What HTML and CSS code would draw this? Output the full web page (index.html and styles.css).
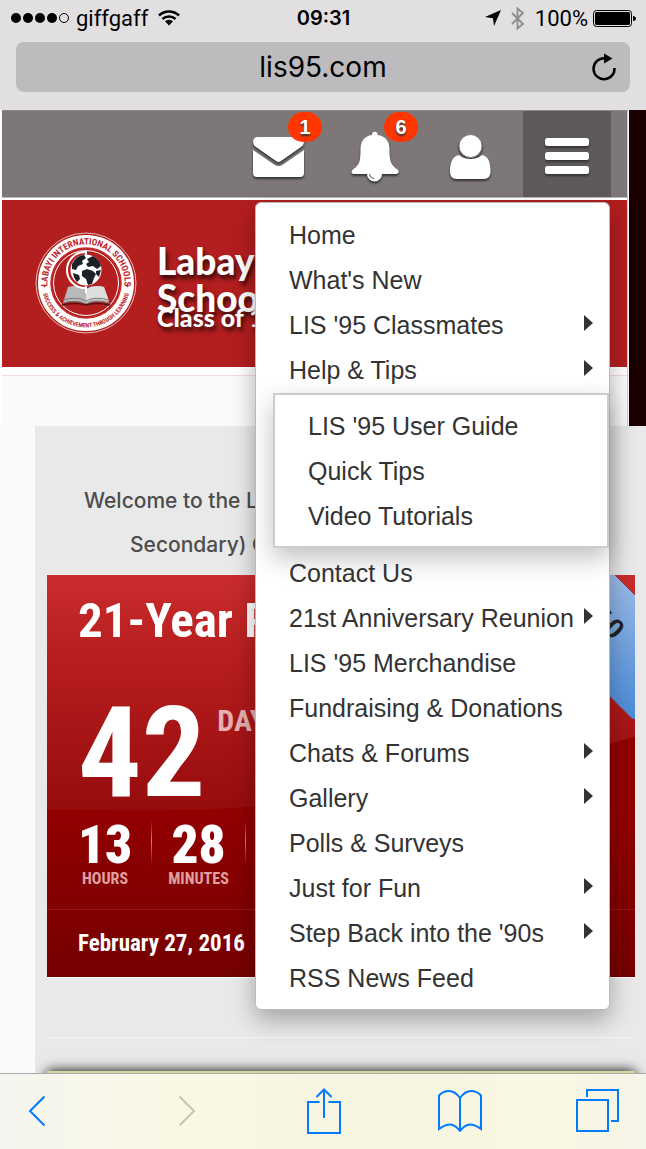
FILE: index.html
```html
<!DOCTYPE html>
<html lang="en">
<head>
<meta charset="utf-8">
<meta name="viewport" content="width=device-width, initial-scale=1">
<title>LIS '95</title>
<link rel="stylesheet" href="styles.css">
</head>
<body>
<div class="app">
  <header class="chrome">
    <div class="status">
      <div class="status-side">
        <svg width="58" height="12" viewBox="0 0 58 12" aria-hidden="true"><circle cx="5" cy="6" r="5"/><circle cx="17" cy="6" r="5"/><circle cx="29" cy="6" r="5"/><circle cx="41" cy="6" r="5"/><circle cx="53" cy="6" r="4.5" fill="none" stroke="#000"/></svg>
        <span class="carrier">giffgaff</span>
        <svg width="22" height="16" viewBox="0 0 22 16" aria-hidden="true"><path d="M1 5.5A14.5 14.5 0 0 1 21 5.5M4.5 9A9.5 9.5 0 0 1 17.500 9" fill="none" stroke="#000" stroke-width="2.6"/><path d="M7 11.300a6 6 0 0 1 8 0L11 15.500z"/></svg>
      </div>
      <time class="clock">09:31</time>
      <div class="status-side status-right">
        <svg width="16" height="16" viewBox="0 0 16 16" aria-hidden="true"><path d="M16 0 9 16 8 8.200 0 7z"/></svg>
        <svg width="14" height="23" viewBox="0 0 14 23" fill="none" stroke="#8c8b8d" stroke-width="1.800" aria-hidden="true"><path d="M1 6l11 11-5.500 4.500v-20L12 6 1 17"/></svg>
        <span class="percent">100%</span>
        <svg width="43" height="17" viewBox="0 0 43 17" aria-hidden="true"><rect x=".5" y=".5" width="38" height="16" rx="3" fill="none" stroke="#000"/><rect x="2" y="2" width="35" height="13" rx="1.500"/><path d="M40 6q3 .5 3 2.500t-3 2.500z"/></svg>
      </div>
    </div>
    <div class="address">
      <span class="domain">lis95.com</span>
      <button class="reload" aria-label="Reload"><svg width="26" height="28" viewBox="0 0 26 28"><path d="M23.500 15A10.500 10.500 0 1 1 13 5.200h3" fill="none" stroke="#000" stroke-width="2.500"/><path d="M13 .5 21.500 5.500 13 10.500z"/></svg></button>
    </div>
  </header>

  <main class="page">
    <div class="top">
      <div class="column">
        <nav class="navbar" aria-label="Main">
          <button class="nav-item" aria-label="Messages">
            <svg class="glyph" width="52" height="42" viewBox="0 0 52 42"><path d="M0 6q0-5 5-5h41q5 0 5 5 0 3-3 5L28 25q-2.500 1.800-5 0L3 11Q0 9 0 6zM0 14l21 14.500q4.500 3 9 0L51 14v23q0 4-4 4H4q-4 0-4-4z"/></svg>
            <span class="badge">1</span>
          </button>
          <button class="nav-item" aria-label="Alerts">
            <svg class="glyph" width="48" height="52" viewBox="0 0 48 52"><path d="M21 4a2.800 2.800 0 1 1 5.500 0C35 5 38.500 11 38.500 18c0 14 2 16 8 20.500 2 2 1 4.500-1.500 4.500H31a7.500 7.500 0 0 1-15 0H3c-3 0-3-3-1-4.500C8 34 9.500 32 9.500 18 9.500 11 13 5 21 4z"/><path d="M18.500 43q.5 4 5 4.500" fill="none" stroke="#777" stroke-width="1.200"/></svg>
            <span class="badge">6</span>
          </button>
          <button class="nav-item" aria-label="Account">
            <svg class="glyph" width="42" height="46" viewBox="0 0 42 46"><path d="M9 21q4.500 4 11.500 4T32 21c7 1 8.500 9 8.500 16 0 5-2 8-7 8H7c-5 0-7-3-7-8 0-7 2-15 9-16z"/><circle cx="20.500" cy="12" r="11.500" stroke="#7e7777"/></svg>
          </button>
          <div class="menu-wrap">
            <button class="nav-item nav-open" aria-label="Menu" aria-expanded="true">
              <svg class="glyph" width="44" height="38" viewBox="0 0 44 38"><rect width="44" height="8" rx="2.500"/><rect width="44" height="8" y="14" rx="2.500"/><rect width="44" height="8" y="28" rx="2.500"/></svg>
            </button>
            <ul class="menu">
              <li><a href="#home">Home</a></li>
              <li><a href="#new">What's New</a></li>
              <li><a class="more" href="#classmates">LIS '95 Classmates</a></li>
              <li><a class="more" href="#help">Help &amp; Tips</a>
                <ul class="submenu">
                  <li><a href="#guide">LIS '95 User Guide</a></li>
                  <li><a href="#tips">Quick Tips</a></li>
                  <li><a href="#video">Video Tutorials</a></li>
                </ul>
              </li>
              <li><a href="#contact">Contact Us</a></li>
              <li><a class="more" href="#reunion">21st Anniversary Reunion</a></li>
              <li><a href="#merchandise">LIS '95 Merchandise</a></li>
              <li><a href="#donations">Fundraising &amp; Donations</a></li>
              <li><a class="more" href="#chats">Chats &amp; Forums</a></li>
              <li><a class="more" href="#gallery">Gallery</a></li>
              <li><a href="#polls">Polls &amp; Surveys</a></li>
              <li><a class="more" href="#fun">Just for Fun</a></li>
              <li><a class="more" href="#nineties">Step Back into the '90s</a></li>
              <li><a href="#rss">RSS News Feed</a></li>
            </ul>
          </div>
        </nav>
        <div class="brand">
          <svg class="crest" width="102" height="102" viewBox="0 0 102 102" role="img" aria-label="School crest">
            <defs>
              <path id="arc-top" d="M16 67A38.500 38.500 0 1 1 86 67"/>
              <path id="arc-bottom" d="M7 47A44.200 44.200 0 1 0 95 47"/>
            </defs>
            <circle cx="51" cy="51" r="50" fill="#b31e1f" stroke="#e9b9b9" stroke-width="1"/>
            <circle cx="51" cy="51" r="40.500" fill="none" stroke="#fff" stroke-width="15"/>
            <circle cx="51" cy="51" r="35" fill="#b31e1f" stroke="#c72b2b" stroke-width="1.500"/>
            <circle cx="51" cy="51" r="32.500" fill="#b31e1f" stroke="#fff" stroke-width="1"/>
            <text class="crest-text"><textPath href="#arc-top" startOffset="50%" text-anchor="middle">LABAYI INTERNATIONAL SCHOOLS</textPath></text>
            <text class="crest-text crest-motto"><textPath href="#arc-bottom" startOffset="50%" text-anchor="middle">SUCCESS &amp; ACHIEVEMENT THROUGH LEARNING</textPath></text>
            <circle cx="9.500" cy="54" r="1.200" fill="#c1272d"/><circle cx="92.500" cy="54" r="1.200" fill="#c1272d"/>
            <path d="M33 55q10-3 18 2 8-5 18-2l5 16q-14-4-23 1-9-5-23-1z" fill="#b9b9b9"/>
            <path d="M51 57q8-5 18-2l5 14q-14-4-23 1z" fill="#dedede"/>
            <path d="M28 71q14-4 23 1 9-5 23-1M28 68q14-4 23 1 9-5 23-1" fill="none" stroke="#777"/>
            <path d="M27 73q14-3 24 0 10-3 24 0" fill="none" stroke="#571010" stroke-width="1.500"/>
            <path d="M50 20A18 18 0 0 0 50 56" fill="none" stroke="#fff" stroke-width="2"/>
            <path d="M51 19v4M51 54v7" stroke="#fff" stroke-width="2"/>
            <circle cx="51" cy="38" r="15.500" fill="#fff"/>
            <path d="M37 32q5-9 12-9l2 3-4 3 1 3-5 2-2 4-4-1zM38 41l6 2 1 4-3 3q-3-3-4-9zM52 27l6-3q7 4 8 10l-4 3-4-3-5 1-2-3 3-2zM47 39l5-2 6 2 3 3-2 4-2 6-4 1-2-6-4-3zM61 39l5-1-2 7-3-3z" fill="#1b2029"/>
          </svg>
          <div class="brand-text">
            <h1>Labayi<br>Schools</h1>
            <p>Class of 1995</p>
          </div>
        </div>
        <div class="spacer"></div>
      </div>
      <aside class="strip"></aside>
    </div>

    <section class="content">
      <p class="welcome">Welcome to the LIS '95</p>
      <p class="welcome welcome-next">Secondary) Class</p>
      <div class="countdown">
        <svg class="gloss" viewBox="0 0 588 403" preserveAspectRatio="none" aria-hidden="true">
          <defs>
            <linearGradient id="shine" x1="0" y1="0" x2="0" y2="1"><stop offset="0" stop-color="#ca2d2d"/><stop offset=".08" stop-color="#c52929"/><stop offset=".4" stop-color="#b51c1d"/><stop offset="1" stop-color="#960c0d"/></linearGradient>
            <linearGradient id="band" x1="0" y1="0" x2="0" y2="1"><stop offset="0" stop-color="#9bbbe8"/><stop offset="1" stop-color="#4a8ad8"/></linearGradient>
          </defs>
          <path d="M0 0H588V162Q350 236 100 236L0 235z" fill="url(#shine)"/>
          <path d="M420 0H568L588 20V144H585L441 0z" fill="url(#band)"/>
          <path d="M568 0 588 20M441 0 585 144" stroke="#933" fill="none"/>
          <text class="ribbon-text" transform="translate(566 66) rotate(45)" text-anchor="end">10</text>
        </svg>
        <div class="count-top">
          <h2>21-Year Reunion</h2>
          <div class="days"><span class="days-num">42</span><span class="days-label">DAYS</span></div>
          <div class="units">
            <div class="unit"><b>13</b><span>HOURS</span></div>
            <div class="unit"><b>28</b><span>MINUTES</span></div>
            <div class="unit"></div>
          </div>
        </div>
        <div class="date">February 27, 2016</div>
      </div>
      <hr class="rule">
      <div class="next-card"></div>
    </section>
  </main>

  <footer class="toolbar">
    <button class="back" aria-label="Back"><svg width="18" height="32" viewBox="0 0 18 32"><path d="M16.500 1.500 2 16l14.500 14.500"/></svg></button>
    <button class="off" aria-label="Forward"><svg width="18" height="32" viewBox="0 0 18 32"><path d="M1.500 1.500 16 16 1.500 30.500"/></svg></button>
    <button aria-label="Share"><svg width="34" height="46" viewBox="0 0 34 46"><path d="M12.500 14H1v31h32V14H21.500M17 30V2M9.500 9 17 1.500 24.500 9"/></svg></button>
    <button aria-label="Bookmarks"><svg width="44" height="42" viewBox="0 0 44 42"><path d="M22 8Q17 1 11 1 5 1 1 5.500V39Q7 34.500 12 34.500T22 41Q27 34.500 32 34.500T43 39V5.500Q39 1 33 1 27 1 22 8V41"/></svg></button>
    <button aria-label="Tabs"><svg width="43" height="43" viewBox="0 0 43 43"><path d="M1 11H32V42H1zM11 8V1H42V32H35"/></svg></button>
  </footer>
</div>
</body>
</html>
```

FILE: styles.css
```css
* { box-sizing: border-box; }
body { margin: 0; font-family: "Liberation Sans", Arial, sans-serif; color: #333; }
h1, h2, p, ul { margin: 0; padding: 0; }
ul { list-style: none; }
a { color: inherit; text-decoration: none; }
button { border: 0; padding: 0; background: none; font: inherit; color: inherit; }
svg { display: block; flex: none; }

.app { display: flex; flex-direction: column; height: 100vh; }

/* Browser chrome */
.chrome { padding: 0 16px 18px; background: #e1dfe0; color: #000; font-family: Inter, Roboto, sans-serif; }
.status { display: flex; align-items: center; height: 36px; margin: 0 -6px 6px -5px; font-size: 20px; }
.status-side { flex: 1; display: flex; align-items: center; gap: 10px; }
.carrier, .percent { font-family: Roboto, sans-serif; font-size: 22px; }
.carrier { margin-left: -3px; }
.status-right { justify-content: flex-end; }
.percent { margin-right: -5px; }
.clock { font-weight: 600; }
.address { display: flex; align-items: center; height: 50px; padding: 0 13px; border-radius: 8px; background: #bdbbbe; }
.domain { flex: 1; padding-left: 26px; text-align: center; font-size: 28px; }

/* Page */
.page { flex: 1; min-height: 0; display: flex; flex-direction: column; background: #fafafa; }
.top { display: flex; }
.column { flex: 1; padding-left: 2px; border-right: 1px solid #ccc; background: #fff; }
.strip { width: 17px; margin-left: 1px; background: #1a0000; }
.navbar { display: flex; justify-content: flex-end; gap: 8px; height: 88px; padding-right: 16px; border-top: 1px solid #8f8989; border-bottom: 1px solid #bbb; background: #7e7777; }
.nav-item { position: relative; display: flex; align-items: center; justify-content: center; width: 88px; height: 86px; padding-top: 5px; }
.nav-open { background: #5e5a59; }
.glyph { fill: #fff; overflow: visible; filter: drop-shadow(0 2px 1px #333); }
.badge { position: absolute; top: 1px; right: 1px; width: 34px; height: 30px; border-radius: 15px; background: #ff3600; color: #fff; font-size: 20px; font-weight: 700; line-height: 31px; text-align: center; text-shadow: 0 2px 2px #333; }

/* Dropdown menu */
.menu-wrap { position: relative; z-index: 2; }
.menu { position: absolute; top: 91px; right: 1px; width: 355px; padding: 10px 0 8px; border: 1px solid #bbb; border-radius: 6px; background: #fff; box-shadow: 0 10px 24px rgba(0, 0, 0, .3); font-size: 25px; line-height: 45px; white-space: nowrap; }
.menu a { display: block; padding-left: 33px; }
.more { position: relative; }
.more::after { content: ""; position: absolute; right: 16px; top: 12px; border-left: 9px solid #333; border-top: 8px solid transparent; border-bottom: 8px solid transparent; }
.submenu { margin: 0 0 3px 17px; padding: 9px 0 7px; border: 2px solid #ccc; background: #fff; box-shadow: 0 10px 24px rgba(0, 0, 0, .25); }

/* School banner */
.brand { display: flex; align-items: center; gap: 20px; height: 167px; margin-top: 2px; padding: 0 0 2px 33px; background: #b31e1f; color: #fff; font-family: Lato, sans-serif; overflow: hidden; }
.brand-text { padding-top: 7px; white-space: nowrap; text-shadow: 2px 4px 4px rgba(0, 0, 0, .7); }
.brand h1 { font-size: 37px; line-height: 37px; font-weight: 900; }
.brand p { margin-top: -13px; font-size: 25px; line-height: 28px; font-weight: 900; }
.crest-text { fill: #c1272d; font: 700 9px "Roboto Condensed", Roboto, sans-serif; }
.crest-motto { font-size: 6px; }
.spacer { height: 59px; border-top: 8px solid #fff; box-shadow: inset 0 1px #f3dcdc; background: #fafafa; }

/* Content */
.content { flex: 1; min-height: 0; margin-left: 35px; padding: 53px 11px 0 12px; background: #e9e9e9; overflow: hidden; }
.welcome { padding-left: 37px; font-family: Inter, sans-serif; font-weight: 500; font-size: 21px; line-height: 44px; color: #4d4d4d; white-space: nowrap; }
.welcome-next { padding-left: 83px; }
.countdown { position: relative; margin-top: 8px; background: linear-gradient(#930000 58%, #750000); border-bottom: 1px solid #fff; color: #fff; font-family: "Roboto Condensed", "Arial Narrow", sans-serif; font-weight: 700; white-space: nowrap; overflow: hidden; }
.gloss { position: absolute; inset: 0; width: 100%; height: 100%; }
.ribbon-text { fill: #222; font: 700 28px "Liberation Sans", sans-serif; }
.count-top { position: relative; padding: 20px 31px 0; height: 335px; border-bottom: 1px solid #901818; }
.countdown h2 { font-size: 49px; line-height: 52px; }
.days { display: flex; gap: 12px; margin-top: 42px; }
.days-num { font-size: 126px; line-height: 128px; }
.days-label { padding-top: 14px; font-size: 30px; color: #e5b0b0; }
.units { display: flex; margin-top: 4px; }
.unit { display: flex; flex-direction: column; align-items: center; width: 94px; height: 68px; }
.unit + .unit { border-left: 1px solid; border-image: linear-gradient(transparent, #d08080 30%, transparent 65%) 1; }
.unit:first-child { width: 73px; padding-right: 19px; }
.unit b { font-size: 53px; line-height: 48px; }
.unit span { font-size: 16px; line-height: 20px; color: #dfa0a0; }
.date { position: relative; padding: 0 31px; font-size: 23px; line-height: 67px; }
.rule { margin: 59px 0 33px; border: 0; border-top: 1px solid #f4f4f4; }
.next-card { height: 80px; background: #d8d6a0; box-shadow: 0 0 12px #000; }

/* Toolbar */
.toolbar { position: relative; display: flex; justify-content: space-between; align-items: center; height: 76px; padding: 0 27px 2px 28px; border-top: 1px solid #aaa; background: linear-gradient(90deg, #f5f5f0, #faf8e2 30%, #f6f5e2 60%, #faf8e2 85%, #f4f4e8); }
.toolbar button { display: flex; justify-content: center; width: 44px; }
.toolbar .back { justify-content: flex-start; }
.toolbar svg { fill: none; stroke: #007aff; stroke-width: 2; }
.toolbar .off svg { stroke: #c4c4ba; }
```
